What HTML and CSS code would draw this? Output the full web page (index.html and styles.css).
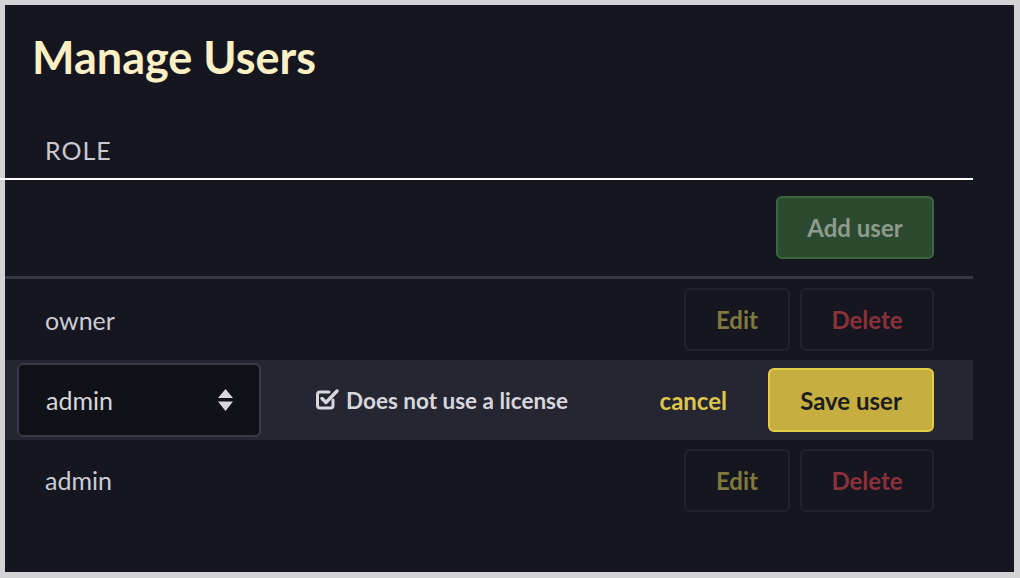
FILE: index.html
```html
<!DOCTYPE html>
<html>
<head>
<meta charset="utf-8">
<link rel="stylesheet" href="styles.css">
</head>
<body>
<div class="panel">
  <h1 class="title">Manage Users</h1>
  <div class="table">
    <div class="thead"><span class="th">ROLE</span></div>
    <div class="toolbar"><button class="btn btn-add">Add user</button></div>
    <div class="row">
      <span class="role">owner</span>
      <div class="actions">
        <button class="btn btn-edit">Edit</button>
        <button class="btn btn-delete">Delete</button>
      </div>
    </div>
    <div class="row row-edit">
      <div class="select">
        <span>admin</span>
        <svg class="sort" width="15" height="22" viewBox="0 0 15 22"><path d="M7.5 0 L15 9 H0 Z M0 12.5 H15 L7.5 22 Z" fill="#d6d6dc"/></svg>
      </div>
      <label class="check">
        <svg class="check-icon" width="23" height="22" viewBox="0 0 23 22"><path d="M17 12 V17.5 a2.5 2.5 0 0 1 -2.5 2.5 H4 a2.5 2.5 0 0 1 -2.5 -2.5 V6.5 a2.5 2.5 0 0 1 2.5 -2.5 H13" fill="none" stroke="#d6d6dc" stroke-width="3" stroke-linecap="round"/><path d="M6 10.5 L10 14.5 L21 3" fill="none" stroke="#d6d6dc" stroke-width="3.4" stroke-linecap="round" stroke-linejoin="round"/></svg>
        <span>Does not use a license</span>
      </label>
      <a class="cancel">cancel</a>
      <button class="btn btn-save">Save user</button>
    </div>
    <div class="row">
      <span class="role">admin</span>
      <div class="actions">
        <button class="btn btn-edit">Edit</button>
        <button class="btn btn-delete">Delete</button>
      </div>
    </div>
  </div>
</div>
</body>
</html>
```
FILE: styles.css
```css
html, body {
  margin: 0;
  padding: 0;
}
body {
  background: #d3d3d6;
  padding: 5px 6px 6px 5px;
  font-family: Lato, "Noto Sans", sans-serif;
  overflow: hidden;
}
.panel {
  background: #161621;
  height: 567px;
  box-sizing: border-box;
  padding-top: 25px;
}
.title {
  margin: 0;
  padding-left: 27px;
  font-size: 45px;
  line-height: 54px;
  font-weight: 700;
  color: #fbf0c4;
}
.table {
  width: 968px;
}
.thead {
  margin-left: -5px;
  padding: 51px 0 13px 45px;
  border-bottom: 2px solid #ffffff;
  font-size: 25px;
  line-height: 30px;
}
.th {
  letter-spacing: 1px;
  color: #c9c9d3;
}
.toolbar {
  display: flex;
  justify-content: flex-end;
  padding: 16px 39px 17px 0;
  border-bottom: 3px solid #363744;
}
.btn {
  font-family: Lato, "Noto Sans", sans-serif;
  font-weight: 700;
  font-size: 24px;
  height: 63px;
  border-radius: 6px;
  border: 2px solid #21222d;
  background: transparent;
  padding: 0;
  cursor: pointer;
}
.btn-add {
  width: 158px;
  background: #2c4a2f;
  border-color: #3c673e;
  color: #8f9b8e;
}
.row {
  display: flex;
  align-items: center;
  justify-content: space-between;
  height: 81px;
  padding: 0 39px 0 40px;
}
.row:last-child {
  height: 80px;
}
.role {
  font-size: 25px;
  color: #cbcbd4;
}
.actions {
  display: flex;
  gap: 10px;
}
.btn-edit {
  width: 106px;
  color: #7e7a3d;
}
.btn-delete {
  width: 134px;
  color: #8b3139;
}
.row-edit {
  height: 80px;
  background: #262633;
  padding: 0 39px 0 12px;
  justify-content: flex-start;
}
.select {
  width: 244px;
  height: 74px;
  box-sizing: border-box;
  background: #111118;
  border: 2px solid #3a3a46;
  border-radius: 6px;
  display: flex;
  align-items: center;
  justify-content: space-between;
  padding: 0 26px 0 27px;
  font-size: 25px;
  color: #d6d6dc;
}
.sort {
  display: block;
}
.check {
  display: flex;
  align-items: center;
  gap: 7px;
  margin-left: 55px;
  font-size: 22.5px;
  font-weight: 700;
  color: #d6d6dc;
}
.check-icon {
  display: block;
  margin-top: -2px;
}
.cancel {
  margin-left: auto;
  margin-right: 41px;
  font-size: 24px;
  font-weight: 700;
  color: #ddc64a;
}
.btn-save {
  width: 166px;
  height: 64px;
  background: #c6ae40;
  border-color: #e4cc4a;
  color: #1d1d1f;
}
```
